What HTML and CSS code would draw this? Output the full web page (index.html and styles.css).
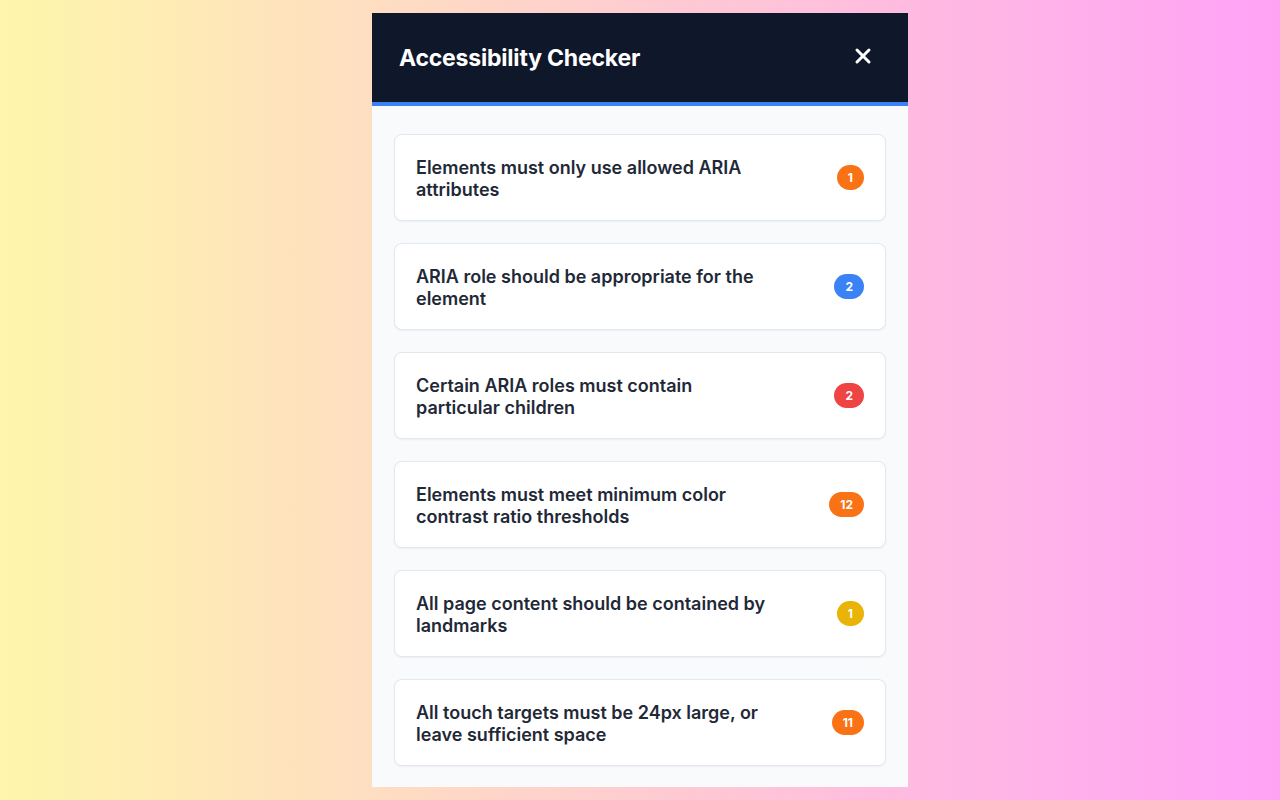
FILE: index.html
```html
<!DOCTYPE html>
<html lang="en">
<head>
<meta charset="utf-8">
<title>Accessibility Checker</title>
<link rel="stylesheet" href="styles.css">
</head>
<body>
<div class="panel">
  <header class="panel-header">
    <h1 class="panel-title">Accessibility Checker</h1>
    <button class="close-btn" aria-label="Close">
      <svg width="18" height="18" viewBox="0 0 18 18"><path d="M3 3 L15 15 M15 3 L3 15" stroke="#fff" stroke-width="3" stroke-linecap="round"/></svg>
    </button>
  </header>
  <ul class="issue-list">
    <li class="issue"><span class="issue-text">Elements must only use allowed ARIA attributes</span><span class="badge badge-orange">1</span></li>
    <li class="issue"><span class="issue-text">ARIA role should be appropriate for the element</span><span class="badge badge-blue">2</span></li>
    <li class="issue"><span class="issue-text">Certain ARIA roles must contain particular children</span><span class="badge badge-red">2</span></li>
    <li class="issue"><span class="issue-text">Elements must meet minimum color contrast ratio thresholds</span><span class="badge badge-orange">12</span></li>
    <li class="issue"><span class="issue-text">All page content should be contained by landmarks</span><span class="badge badge-yellow">1</span></li>
    <li class="issue"><span class="issue-text">All touch targets must be 24px large, or leave sufficient space</span><span class="badge badge-orange">11</span></li>
  </ul>
</div>
</body>
</html>
```
FILE: styles.css
```css
html, body {
  margin: 0;
  padding: 0;
  height: 100%;
}
body {
  background: linear-gradient(to right, #fef6ab, #ffa2f6);
  font-family: Inter, "Noto Sans", "Liberation Sans", sans-serif;
  display: flex;
  align-items: center;
  justify-content: center;
}
.panel {
  width: 536px;
  background: #f8fafc;
  display: flex;
  flex-direction: column;
}
.panel-header {
  height: 89px;
  background: #0f172a;
  border-bottom: 4px solid #3b82f6;
  box-sizing: content-box;
  display: flex;
  align-items: center;
  justify-content: space-between;
  padding: 0 36px 0 27px;
}
.panel-title {
  margin: 0;
  color: #ffffff;
  font-size: 23px;
  font-weight: 700;
  letter-spacing: -0.2px;
}
.close-btn {
  background: none;
  border: none;
  padding: 0;
  width: 18px;
  height: 18px;
  display: flex;
  cursor: pointer;
  margin-top: -4px;
}
.issue-list {
  list-style: none;
  margin: 0;
  padding: 28px 22px 21px;
  display: flex;
  flex-direction: column;
  gap: 22px;
}
.issue {
  height: 87px;
  box-sizing: border-box;
  background: #ffffff;
  border: 1px solid #e2e8f0;
  border-radius: 8px;
  box-shadow: 0 1px 2px rgba(15, 23, 42, 0.05);
  padding: 0 21px;
  display: flex;
  align-items: center;
  justify-content: space-between;
}
.issue-text {
  max-width: 354px;
  padding-top: 2px;
  color: #1f2937;
  font-size: 18px;
  font-weight: 600;
  line-height: 22px;
}
.badge {
  min-width: 26px;
  height: 25px;
  box-sizing: border-box;
  padding: 0 11px;
  border-radius: 13px;
  color: #ffffff;
  font-size: 12px;
  font-weight: 700;
  display: flex;
  align-items: center;
  justify-content: center;
}
.badge-orange { background: #f97316; }
.badge-blue { background: #3b82f6; }
.badge-red { background: #ef4444; }
.badge-yellow { background: #eab308; }
```
